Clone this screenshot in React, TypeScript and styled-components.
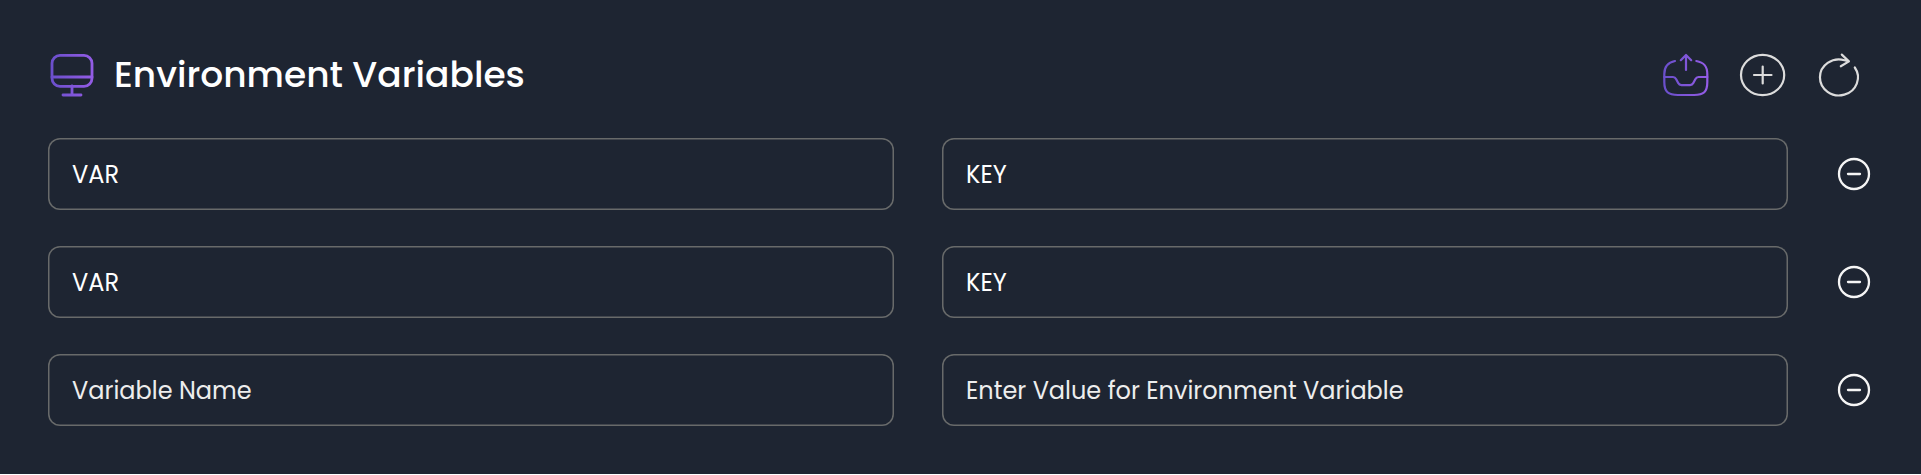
import React from "react";
import styled, { createGlobalStyle } from "styled-components";

const GlobalStyle = createGlobalStyle`
  * { box-sizing: border-box; }
  body { margin: 0; background: #ffffff; }
`;

const Panel = styled.section`
  height: 474px;
  padding: 48px 48px 0;
  background: #1e2532;
  color: #fff;
  font-family: Poppins, Inter, sans-serif;
`;

const Header = styled.header`
  display: flex;
  align-items: center;
  justify-content: space-between;
  height: 54px;
  margin-bottom: 36px;
`;

const TitleGroup = styled.div`
  display: flex;
  align-items: center;
  gap: 18px;
`;

const Title = styled.h1`
  margin: 0;
  font-size: 36px;
  font-weight: 500;
  line-height: 54px;
  white-space: nowrap;
`;

const Actions = styled.div`
  display: flex;
  align-items: center;
  gap: 29px;
  padding-right: 9px;
`;

const IconButton = styled.button`
  display: flex;
  padding: 0;
  border: 0;
  background: none;
  color: #dcdcdc;
`;

const RemoveButton = styled(IconButton)`
  margin-left: 48px;
  color: #f5f5f5;
`;

const Rows = styled.div`
  display: flex;
  flex-direction: column;
  gap: 36px;
`;

const Row = styled.div`
  display: flex;
  align-items: center;
`;

const Fields = styled.div`
  display: grid;
  grid-template-columns: 846px 846px;
  gap: 48px;
`;

const Field = styled.div<{ $placeholder?: boolean }>`
  height: 72px;
  padding: 0 24px;
  border-radius: 12px;
  box-shadow: inset 0 0 0 1.5px #686a6a;
  color: ${(p) => (p.$placeholder ? "#ededed" : "#ffffff")};
  font-size: 24px;
  line-height: 73px;
  white-space: nowrap;
`;

const MonitorIcon = () => (
  <svg width="48" height="48" viewBox="0 0 48 48" fill="none" stroke="url(#monitor)" strokeWidth="2.8" strokeLinecap="round">
    <defs>
      <linearGradient id="monitor" gradientUnits="userSpaceOnUse" x1="2" y1="20" x2="46" y2="20">
        <stop stopColor="#6a4fcb" />
        <stop offset="1" stopColor="#945ce6" />
      </linearGradient>
    </defs>
    <rect x="4" y="4.300" width="40" height="31" rx="8" />
    <path d="M4 26H44M24 35V44M15 44H33" />
  </svg>
);

const UploadIcon = () => (
  <svg width="48" height="48" viewBox="0 0 48 48" fill="none" stroke="url(#upload)" strokeWidth="2.2" strokeLinecap="round" strokeLinejoin="round">
    <defs>
      <linearGradient id="upload" gradientUnits="userSpaceOnUse" x1="2" y1="20" x2="46" y2="20">
        <stop stopColor="#6a4fcb" />
        <stop offset="1" stopColor="#945ce6" />
      </linearGradient>
    </defs>
    <path d="M13 10C5.500 11.500 2.300 15.500 2.300 23V31C2.300 41 6.300 44 16 44H32C41.700 44 45.300 41 45.300 31V23C45.300 15.500 42.500 11.500 34.300 10" />
    <path d="M2.300 26H11C12.500 26 13.500 26.800 14.200 28.200L16.200 32.100C16.900 33.500 18 34.100 19.500 34.100H28C29.500 34.100 30.600 33.500 31.300 32.100L33.300 28.200C34 26.800 35 26 36.500 26H45.300" />
    <path d="M24 19V4.500M18.800 9.200L24 4L29.200 9.200" />
  </svg>
);

const AddIcon = () => (
  <svg width="48" height="48" viewBox="0 0 48 48" fill="none" stroke="currentColor" strokeWidth="2.200" strokeLinecap="round">
    <ellipse cx="23.600" cy="24" rx="21.600" ry="20.200" />
    <path d="M15 24H32.500M23.700 15.500V32.500" />
  </svg>
);

const RefreshIcon = () => (
  <svg width="48" height="48" viewBox="0 0 48 48" fill="none" stroke="currentColor" strokeWidth="2.200" strokeLinecap="round" strokeLinejoin="round">
    <path d="M38.800 16.500A19 18 0 1 1 28.500 9.200L32.900 10.400M25.800 3.600L32.900 10.400L24.800 15.300" />
  </svg>
);

const RemoveIcon = () => (
  <svg width="36" height="36" viewBox="0 0 36 36" fill="none" stroke="currentColor" strokeWidth="2.300" strokeLinecap="round">
    <circle cx="18" cy="18" r="15" />
    <path d="M12 18H24" />
  </svg>
);

const variables = [
  { name: "VAR", value: "KEY" },
  { name: "VAR", value: "KEY" },
  { name: "Variable Name", value: "Enter Value for Environment Variable", placeholder: true },
];

export default function App() {
  return (
    <>
      <GlobalStyle />
      <Panel>
        <Header>
          <TitleGroup>
            <MonitorIcon />
            <Title>Environment Variables</Title>
          </TitleGroup>
          <Actions>
            <IconButton aria-label="Import"><UploadIcon /></IconButton>
            <IconButton aria-label="Add"><AddIcon /></IconButton>
            <IconButton aria-label="Reset"><RefreshIcon /></IconButton>
          </Actions>
        </Header>
        <Rows>
          {variables.map((v, i) => (
            <Row key={i}>
              <Fields>
                <Field $placeholder={v.placeholder}>{v.name}</Field>
                <Field $placeholder={v.placeholder}>{v.value}</Field>
              </Fields>
              <RemoveButton aria-label="Remove"><RemoveIcon /></RemoveButton>
            </Row>
          ))}
        </Rows>
      </Panel>
    </>
  );
}
